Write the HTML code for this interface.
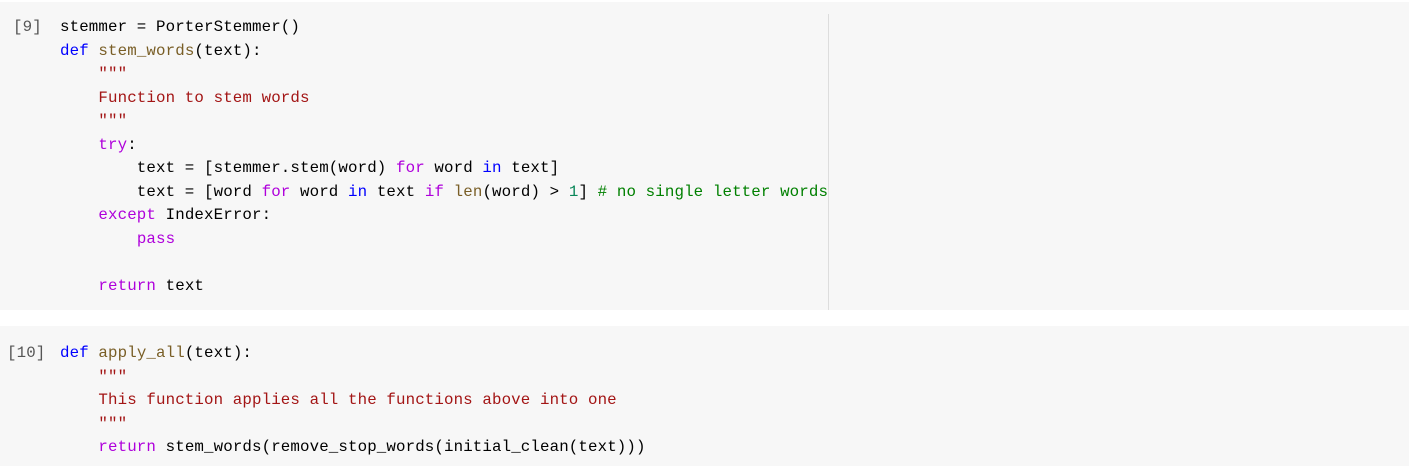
<!DOCTYPE html>
<html><head><style>
body{margin:0;background:#fff;width:1409px;height:474px;overflow:hidden;font-family:"Liberation Mono",monospace;font-size:15.8px;letter-spacing:0.12px;}
.cell{position:absolute;left:0;width:1409px;background:#f7f7f7;}
.l{position:absolute;white-space:pre;line-height:23.5px;color:#000;}
.p{color:#555}
.k{color:#0000ff}.f{color:#795e26}.s{color:#a31515}.c{color:#af00db}.n{color:#098658}.g{color:#008000}.b{color:#795e26}
</style></head><body>
<div class="cell" style="top:2px;height:308px;">
<div style="position:absolute;left:828px;top:12px;width:1px;height:296px;background:#ddd"></div>
</div>
<div class="cell" style="top:326px;height:140px;"></div>
<div class="l p" style="left:13px;top:16px">[9]</div>
<div class="l" style="left:60px;top:16px">stemmer = PorterStemmer()
<span class="k">def</span> <span class="f">stem_words</span>(text):
    <span class="s">"""</span>
<span class="s">    Function to stem words</span>
<span class="s">    """</span>
    <span class="c">try</span>:
        text = [stemmer.stem(word) <span class="c">for</span> word <span class="k">in</span> text]
        text = [word <span class="c">for</span> word <span class="k">in</span> text <span class="c">if</span> <span class="b">len</span>(word) &gt; <span class="n">1</span>] <span class="g"># no single letter words</span>
    <span class="c">except</span> IndexError:
        <span class="c">pass</span>

    <span class="c">return</span> text</div>
<div class="l p" style="left:7px;top:342px">[10]</div>
<div class="l" style="left:60px;top:342px"><span class="k">def</span> <span class="f">apply_all</span>(text):
    <span class="s">"""</span>
<span class="s">    This function applies all the functions above into one</span>
<span class="s">    """</span>
    <span class="c">return</span> stem_words(remove_stop_words(initial_clean(text)))</div>
</body></html>
